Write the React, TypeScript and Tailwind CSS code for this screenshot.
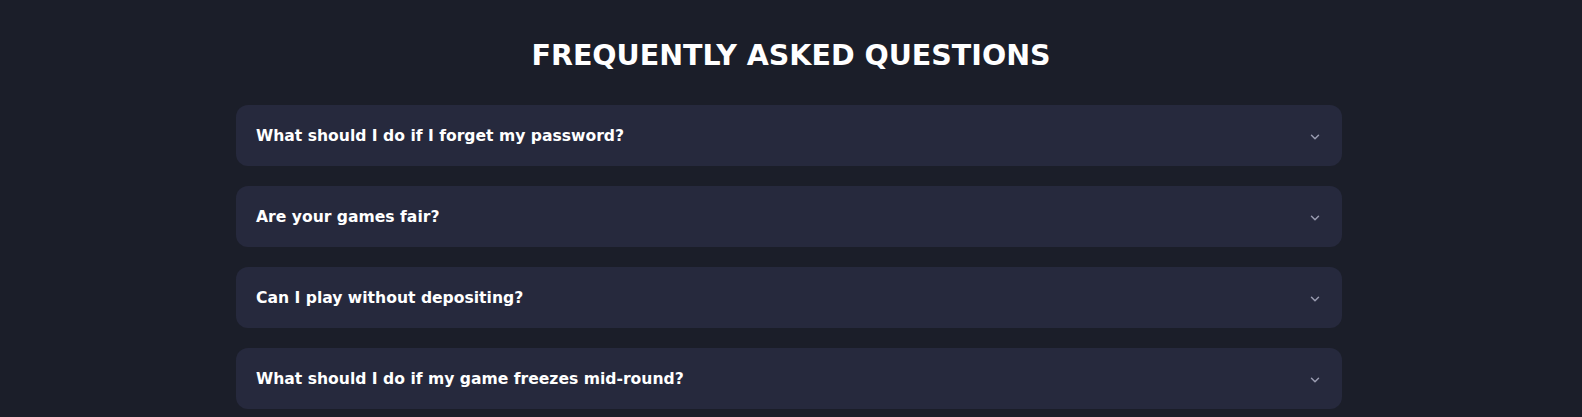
import { ChevronDown } from 'lucide-react';

const faqs = [
  'What should I do if I forget my password?',
  'Are your games fair?',
  'Can I play without depositing?',
  'What should I do if my game freezes mid-round?',
];

export default function App() {
  return (
    <section className="min-h-screen bg-[#1b1e29] pt-[39px] pb-10 font-['DejaVu_Sans',sans-serif]">
      <h2 className="text-center text-[28.5px] leading-[34px] font-bold text-white mb-[32px]">
        FREQUENTLY ASKED QUESTIONS
      </h2>
      <div className="w-[1106px] ml-[236px] flex flex-col gap-5">
        {faqs.map((q) => (
          <button
            key={q}
            className="h-[61px] w-full flex items-center justify-between rounded-xl bg-[#26293d] pl-5 pr-5 pt-[2px] text-left"
          >
            <span className="text-[15.6px] font-bold text-white">{q}</span>
            <ChevronDown className="w-[14px] h-[14px] text-[#9a9cb0]" strokeWidth={2.5} />
          </button>
        ))}
      </div>
    </section>
  );
}
